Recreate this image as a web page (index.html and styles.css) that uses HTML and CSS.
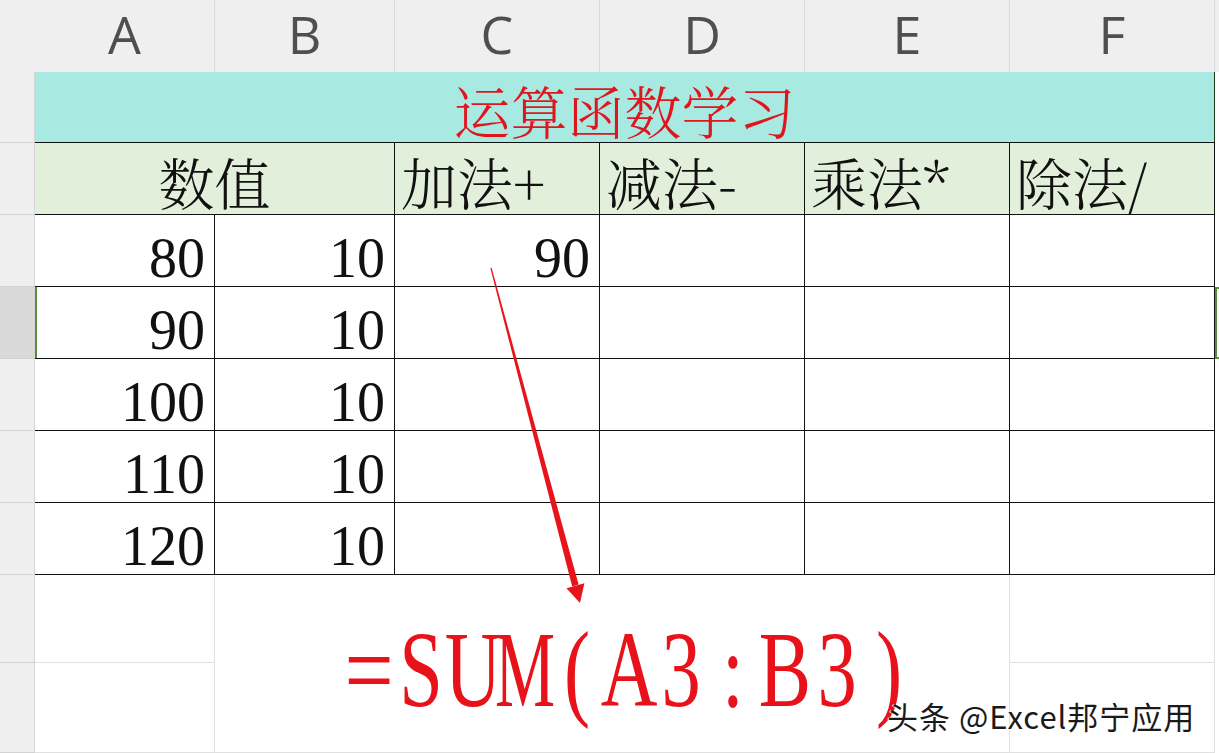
FILE: index.html
```html
<!DOCTYPE html>
<html lang="zh-CN">
<head>
<meta charset="utf-8">
<title>运算函数学习</title>
<link rel="stylesheet" href="styles.css">
</head>
<body>
<div class="sheet">
  <div class="corner"></div>
  <div class="colhdr">A</div>
  <div class="colhdr">B</div>
  <div class="colhdr">C</div>
  <div class="colhdr">D</div>
  <div class="colhdr">E</div>
  <div class="colhdr">F</div>
  <div class="colhdr sliver"></div>

  <div class="rowhdr"></div>
  <div class="title">运算函数学习</div>
  <div class="gcell"></div>

  <div class="rowhdr"></div>
  <div class="head head-ab">数值</div>
  <div class="head">加法+</div>
  <div class="head">减法-</div>
  <div class="head">乘法*</div>
  <div class="head">除法/</div>
  <div class="gcell"></div>

  <div class="rowhdr"></div>
  <div class="cell num">80</div>
  <div class="cell num">10</div>
  <div class="cell num">90</div>
  <div class="cell"></div>
  <div class="cell"></div>
  <div class="cell"></div>
  <div class="gcell"></div>

  <div class="rowhdr selected"></div>
  <div class="cell num sel-left">90</div>
  <div class="cell num">10</div>
  <div class="cell"></div>
  <div class="cell"></div>
  <div class="cell"></div>
  <div class="cell"></div>
  <div class="gcell sel-right"></div>

  <div class="rowhdr"></div>
  <div class="cell num">100</div>
  <div class="cell num">10</div>
  <div class="cell"></div>
  <div class="cell"></div>
  <div class="cell"></div>
  <div class="cell"></div>
  <div class="gcell"></div>

  <div class="rowhdr"></div>
  <div class="cell num">110</div>
  <div class="cell num">10</div>
  <div class="cell"></div>
  <div class="cell"></div>
  <div class="cell"></div>
  <div class="cell"></div>
  <div class="gcell"></div>

  <div class="rowhdr"></div>
  <div class="cell num">120</div>
  <div class="cell num">10</div>
  <div class="cell"></div>
  <div class="cell"></div>
  <div class="cell"></div>
  <div class="cell"></div>
  <div class="gcell"></div>

  <div class="rowhdr"></div>
  <div class="blank"></div>
  <div class="formula-cell">
    <div class="formula"><span class="eq">=</span><span>S</span><span>U</span><span class="m">M</span><span>(</span><span>A</span><span>3</span><span>:</span><span>B</span><span>3</span><span>)</span></div>
  </div>
  <div class="blank"></div>
  <div class="gcell"></div>

  <div class="rowhdr"></div>
  <div class="blank"></div>
  <div class="blank"></div>
  <div class="gcell"></div>

  <svg class="arrow" width="1219" height="753" viewBox="0 0 1219 753" aria-hidden="true">
    <polygon points="490.4,268.2 491.6,267.8 578.6,584.6 572.2,586.6" fill="#e8141b"/>
    <polygon points="580,603 566.5,588.2 584.4,583.2" fill="#e8141b"/>
  </svg>
  <div class="watermark">头条 @Excel邦宁应用</div>
</div>
</body>
</html>
```

FILE: styles.css
```css
* { box-sizing: border-box; }

html, body {
  margin: 0;
  padding: 0;
  background: #ffffff;
}

.sheet {
  position: relative;
  width: 1219px;
  height: 753px;
  overflow: hidden;
  display: grid;
  grid-template-columns: 35px 180px 180px 205px 205px 205px 205px 4px;
  grid-template-rows: 72px 71px 72px 72px 72px 72px 72px 72px 88px 90px;
  font-family: "Liberation Serif", serif;
}

.corner {
  background: #efefef;
}

.colhdr {
  background: #efefef;
  border-right: 1px solid #dadada;
  display: flex;
  align-items: center;
  justify-content: center;
  padding-bottom: 4px;
  font-family: "Open Sans", "Liberation Sans", sans-serif;
  font-size: 52px;
  line-height: 1.2;
  color: #4f4f4f;
}

.colhdr.sliver {
  border-right: none;
}

.rowhdr {
  background: #efefef;
  border-right: 1px solid #d6d6d6;
  border-bottom: 1px solid #d2d2d2;
}

.rowhdr.selected {
  background: #d9d9d9;
}

.gcell {
  background: #ffffff;
}

.title {
  grid-column: span 6;
  background: #a8e9e2;
  border-right: 1px solid #1d3a1d;
  border-bottom: 1px solid #111;
  display: flex;
  align-items: center;
  justify-content: center;
  padding-top: 4px;
  font-family: "Noto Serif CJK SC", "Noto Sans CJK SC", sans-serif;
  font-weight: 300;
  font-size: 57px;
  line-height: 1;
  color: #e0161d;
}

.head {
  background: #e2efda;
  border-right: 1px solid #111;
  border-bottom: 1px solid #111;
  display: flex;
  align-items: center;
  padding: 5px 0 0 6px;
  font-family: "Noto Serif CJK SC", "Noto Sans CJK SC", sans-serif;
  font-weight: 300;
  font-size: 56px;
  line-height: 1;
  color: #111;
  white-space: nowrap;
}

.head-ab {
  grid-column: span 2;
  justify-content: center;
  padding-left: 0;
}

.cell {
  background: #ffffff;
  border-right: 1px solid #111;
  border-bottom: 1px solid #111;
}

.num {
  display: flex;
  align-items: flex-end;
  justify-content: flex-end;
  padding-right: 9px;
  font-family: "Liberation Serif", serif;
  font-size: 56px;
  line-height: 1;
  color: #111;
}

.sel-left {
  box-shadow: inset 2px 0 0 #5b8c3c;
}

.sel-right {
  border-left: 2px solid #5b8c3c;
  border-top: 2px solid #5b8c3c;
  border-bottom: 2px solid #5b8c3c;
}

.blank {
  border-right: 1px solid #e0e0e0;
  border-bottom: 1px solid #e0e0e0;
}

.formula-cell {
  grid-column: span 4;
  grid-row: span 2;
  border-right: 1px solid #e0e0e0;
  border-bottom: 1px solid #e0e0e0;
  padding: 40px 0 0 128px;
}

.formula {
  display: flex;
  font-family: "Liberation Serif", serif;
  font-size: 109px;
  line-height: 1;
  color: #e8121a;
}

.formula span {
  display: flex;
  justify-content: center;
  width: 52px;
  flex: 0 0 52px;
  white-space: nowrap;
  transform: scaleX(0.72);
}

.formula span.eq {
  transform: scaleX(0.8);
}

.formula span.m {
  transform: scaleX(0.62);
}

.arrow {
  position: absolute;
  left: 0;
  top: 0;
  pointer-events: none;
}

.watermark {
  position: absolute;
  left: 887px;
  top: 700px;
  font-family: "Noto Sans CJK SC", "Noto Sans", sans-serif;
  font-size: 31px;
  line-height: 1;
  letter-spacing: 1px;
  color: #1a1a1a;
  text-shadow: 1px 1px 0 #ffffff, -1px 0 0 #ffffff;
  white-space: nowrap;
}
```
